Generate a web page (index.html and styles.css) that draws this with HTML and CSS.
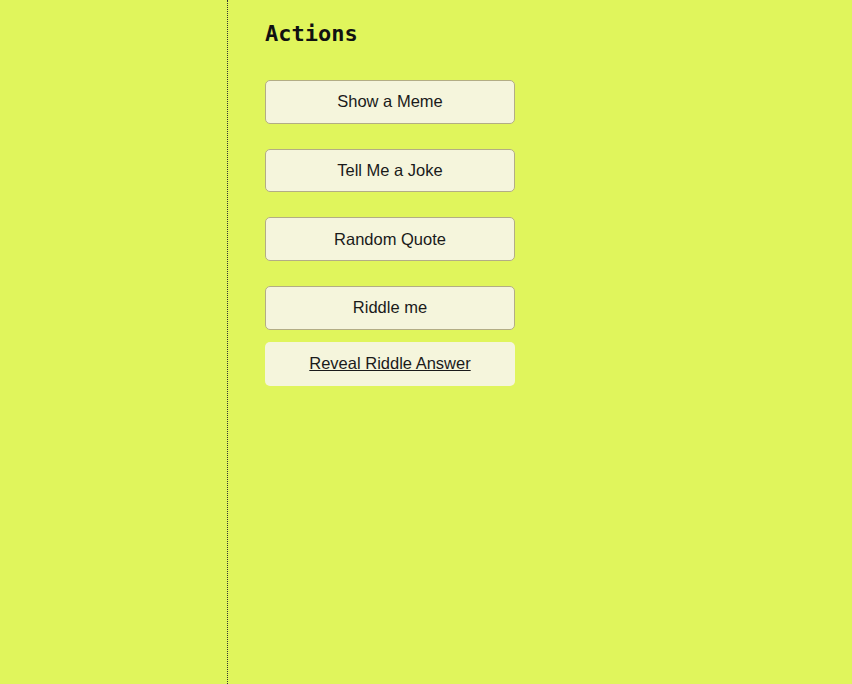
FILE: index.html
```html
<!DOCTYPE html>
<html lang="en">
<head>
<meta charset="utf-8">
<title>Actions</title>
<link rel="stylesheet" href="styles.css">
</head>
<body>
<div class="layout">
  <aside class="sidebar"></aside>
  <main class="main">
    <h2 class="title">Actions</h2>
    <div class="actions">
      <button class="btn">Show a Meme</button>
      <button class="btn">Tell Me a Joke</button>
      <button class="btn">Random Quote</button>
      <button class="btn btn-last">Riddle me</button>
      <a class="reveal" href="#">Reveal Riddle Answer</a>
    </div>
  </main>
</div>
</body>
</html>
```
FILE: styles.css
```css
html, body {
  margin: 0;
  padding: 0;
  height: 100%;
}
body {
  background: #e0f55c;
  font-family: "Liberation Sans", Arial, sans-serif;
}
.layout {
  display: flex;
  height: 100vh;
}
.sidebar {
  width: 227px;
  flex: none;
  border-right: 1px dotted #333333;
}
.main {
  padding-left: 37px;
}
.title {
  font-family: "DejaVu Sans Mono", monospace;
  font-weight: bold;
  font-size: 22px;
  line-height: 26px;
  margin: 21px 0 33px;
  color: #111111;
}
.actions {
  display: flex;
  flex-direction: column;
  width: 250px;
}
.btn {
  box-sizing: border-box;
  height: 43.7px;
  width: 250px;
  margin-bottom: 25px;
  background: #f5f5dc;
  border: 1px solid #b3ad85;
  border-radius: 5px;
  font-family: "Liberation Sans", Arial, sans-serif;
  font-size: 16.5px;
  color: #1a1a1a;
  padding: 0;
}
.btn-last {
  margin-bottom: 12px;
}
.reveal {
  display: flex;
  align-items: center;
  justify-content: center;
  height: 44px;
  background: #f5f5dc;
  border-radius: 5px;
  font-size: 16.5px;
  color: #1a1a1a;
  text-decoration: underline;
}
```
